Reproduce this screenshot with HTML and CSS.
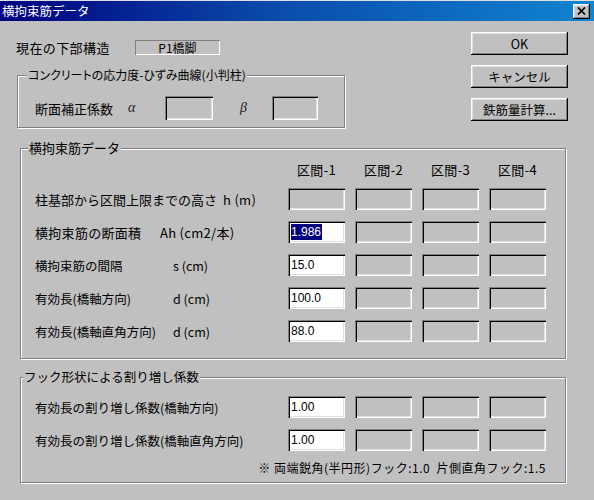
FILE: index.html
```html
<!DOCTYPE html>
<html lang="ja">
<head>
<meta charset="utf-8">
<title>横拘束筋データ</title>
<link rel="stylesheet" href="styles.css">
</head>
<body>
<div class="window">
  <div class="titlebar">
    <span class="title">横拘束筋データ</span>
    <span class="close"><svg width="9" height="8" viewBox="0 0 9 8"><path d="M1 0.5L8 7.5M8 0.5L1 7.5" stroke="#000" stroke-width="1.7"/></svg></span>
  </div>

  <div class="top">
    <div class="top-left">
      <div class="current">
        <span class="current-label">現在の下部構造</span>
        <span class="static">P1橋脚</span>
      </div>
      <div class="group g1">
        <span class="legend">コンクリートの応力度-ひずみ曲線(小判柱)</span>
        <div class="coef-row">
          <span class="coef-label">断面補正係数</span>
          <span class="greek alpha">α</span>
          <span class="edit coef"></span>
          <span class="greek beta">β</span>
          <span class="edit coef narrow"></span>
        </div>
      </div>
    </div>
    <div class="buttons">
      <button class="btn">OK</button>
      <button class="btn">キャンセル</button>
      <button class="btn">鉄筋量計算...</button>
    </div>
  </div>

  <div class="group g2">
    <span class="legend">横拘束筋データ</span>
    <div class="grid">
      <span></span>
      <span class="colhead">区間-1</span>
      <span class="colhead">区間-2</span>
      <span class="colhead">区間-3</span>
      <span class="colhead">区間-4</span>

      <div class="rowlabel big"><span class="name u0">柱基部から区間上限までの高さ</span><span>h (m)</span></div>
      <span class="edit"></span><span class="edit"></span><span class="edit"></span><span class="edit"></span>

      <div class="rowlabel big"><span class="name u1">横拘束筋の断面積</span><span>Ah (cm2/本)</span></div>
      <span class="edit on"><span class="sel">1.986</span></span><span class="edit"></span><span class="edit"></span><span class="edit"></span>

      <div class="rowlabel"><span class="name u2">横拘束筋の間隔</span><span>s (cm)</span></div>
      <span class="edit on">15.0</span><span class="edit"></span><span class="edit"></span><span class="edit"></span>

      <div class="rowlabel"><span class="name u2">有効長(橋軸方向)</span><span>d (cm)</span></div>
      <span class="edit on">100.0</span><span class="edit"></span><span class="edit"></span><span class="edit"></span>

      <div class="rowlabel"><span class="name u2">有効長(橋軸直角方向)</span><span>d (cm)</span></div>
      <span class="edit on">88.0</span><span class="edit"></span><span class="edit"></span><span class="edit"></span>
    </div>
  </div>

  <div class="group g3">
    <span class="legend">フック形状による割り増し係数</span>
    <div class="grid grid3">
      <div class="rowlabel"><span>有効長の割り増し係数(橋軸方向)</span></div>
      <span class="edit on">1.00</span><span class="edit"></span><span class="edit"></span><span class="edit"></span>

      <div class="rowlabel"><span>有効長の割り増し係数(橋軸直角方向)</span></div>
      <span class="edit on">1.00</span><span class="edit"></span><span class="edit"></span><span class="edit"></span>

      <div class="note">※ 両端鋭角(半円形)フック:1.0&nbsp;&nbsp;片側直角フック:1.5</div>
    </div>
  </div>
</div>
</body>
</html>
```

FILE: styles.css
```css
* { box-sizing: border-box; }

html, body {
  margin: 0;
  padding: 0;
  background: #c0c0c0;
}

body {
  width: 594px;
  height: 500px;
  overflow: hidden;
  font-family: "Noto Sans CJK JP", "Noto Sans", sans-serif;
  font-size: 13px;
  color: #000;
}

.window {
  width: 594px;
  height: 500px;
  border-top: 1px solid #dfdfdf;
}

/* title bar */
.titlebar {
  height: 20px;
  background: linear-gradient(to right, #000080 0%, #0a4aa8 45%, #1084d0 100%);
  display: flex;
  align-items: center;
  justify-content: space-between;
  padding: 0 4px 0 2px;
}

.title {
  color: #fff;
  font-size: 12.5px;
  line-height: 16px;
}

.close {
  width: 17px;
  height: 15px;
  background: #c0c0c0;
  box-shadow: inset -1px -1px #000, inset 1px 1px #fff, inset -2px -2px #808080, inset 2px 2px #dfdfdf;
  display: flex;
  align-items: center;
  justify-content: center;
}

/* top area */
.top {
  display: flex;
  justify-content: space-between;
  padding: 0 26px 0 16px;
}

.top-left {
  width: 329px;
}

.current {
  display: flex;
  align-items: center;
  height: 15px;
  margin-top: 19px;
}

.current-label {
  width: 119px;
  letter-spacing: 0.4px;
  line-height: 15px;
}

.static {
  width: 85px;
  height: 15px;
  line-height: 15px;
  font-size: 12px;
  text-align: center;
  box-shadow: inset 1px 1px #808080, inset -1px -1px #fff;
}

.buttons {
  width: 97px;
  margin-top: 11px;
  display: flex;
  flex-direction: column;
  gap: 10px;
}

.btn {
  height: 23px;
  width: 97px;
  padding: 0;
  border: none;
  background: #c0c0c0;
  font-family: "Noto Sans CJK JP", sans-serif;
  font-size: 12.5px;
  color: #000;
  box-shadow: inset -1px -1px #000, inset 1px 1px #fff, inset -2px -2px #808080, inset 2px 2px #dfdfdf;
}

/* group boxes */
.group {
  position: relative;
  border: 1px solid #808080;
  box-shadow: inset 1px 1px #fff, 1px 1px #fff;
}

.legend {
  position: absolute;
  top: -9px;
  background: #c0c0c0;
  padding: 0 1px;
  line-height: 16px;
  white-space: nowrap;
}

.g1 {
  margin: 20px 0 0 1px;
  width: 328px;
  height: 53px;
  padding: 20px 0 0 17px;
}
.g1 .legend {
  left: 9px;
  font-size: 12px;
  font-feature-settings: "palt";
}

.coef-row {
  display: flex;
  align-items: center;
  height: 24px;
}

.coef-label { width: 93px; }

.greek {
  font-family: "Liberation Serif", "DejaVu Serif", serif;
  font-style: italic;
  font-size: 14px;
  color: #222;
}
.alpha { width: 37px; }
.beta { width: 32px; margin-left: 27px; }

.edit.coef { width: 48px; height: 24px; }
.edit.coef.narrow { width: 46px; }

.g2 {
  margin: 20px 0 0 20px;
  width: 546px;
  height: 211px;
  padding: 14px 0 0 14px;
}
.g2 .legend { left: 7px; }

.g3 {
  margin: 18px 0 0 20px;
  width: 546px;
  height: 106px;
  padding: 18px 0 0 14px;
}
.g3 .legend { left: 2px; font-size: 12.5px; }

/* grids */
.grid {
  display: grid;
  grid-template-columns: 243px repeat(4, 57px);
  grid-template-rows: 14px repeat(5, 22px);
  column-gap: 10px;
  row-gap: 11px;
}

.grid3 {
  grid-template-rows: 22px 22px 14px;
}

.colhead {
  text-align: center;
  line-height: 14px;
  letter-spacing: 0.3px;
}

.rowlabel {
  display: flex;
  align-items: center;
  white-space: nowrap;
  font-size: 12.5px;
}
.rowlabel.big { font-size: 13px; letter-spacing: 0.3px; }

.rowlabel .name { flex-shrink: 0; }
.rowlabel .name.u0 { width: 188px; letter-spacing: 0; }
.rowlabel .name.u1 { width: 125px; }
.rowlabel .name.u2 { width: 138px; }

.edit {
  display: flex;
  align-items: center;
  width: 57px;
  height: 22px;
  padding-left: 3px;
  background: #c0c0c0;
  font-family: "Liberation Sans", Arial, sans-serif;
  font-size: 12px;
  box-shadow: inset 1px 1px #808080, inset 2px 2px #000, inset -1px -1px #fff, inset -2px -2px #dfdfdf;
}

.edit.on { background: #fff; }

.sel {
  background: #000080;
  color: #fff;
  line-height: 16px;
  padding-right: 1px;
}

.note {
  grid-column: 1 / -1;
  justify-self: end;
  margin-top: -1px;
  font-size: 12px;
  letter-spacing: 0.5px;
  line-height: 14px;
  white-space: nowrap;
}
```
